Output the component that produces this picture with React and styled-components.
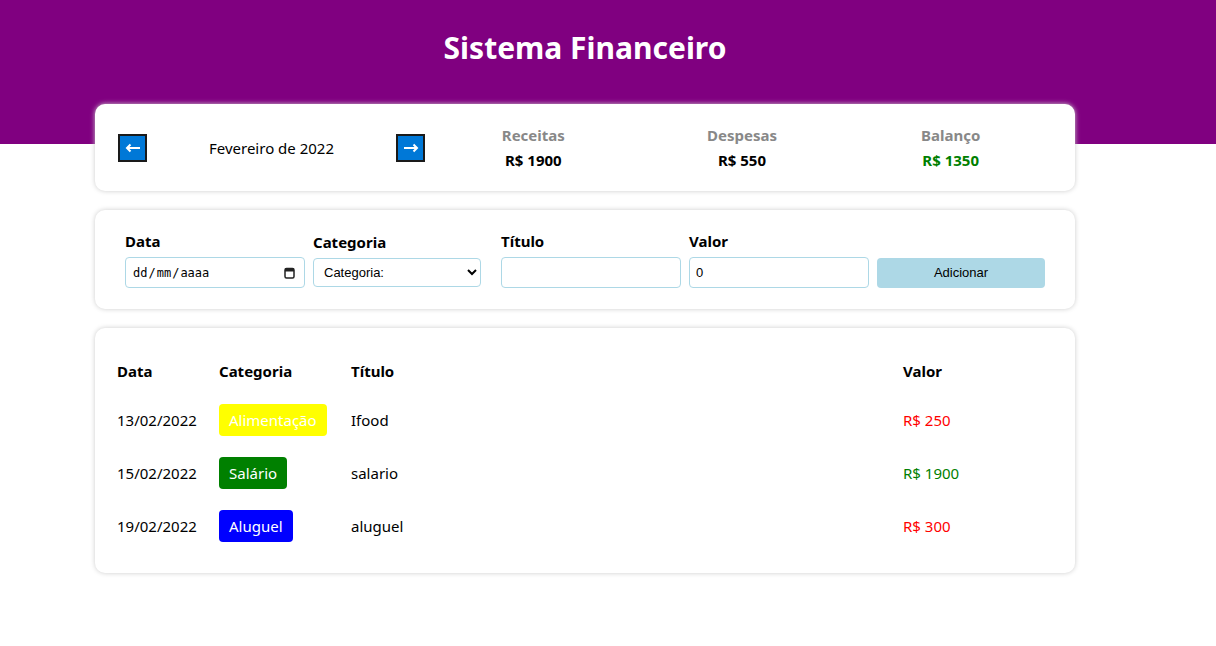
import React from 'react'
import styled, { createGlobalStyle } from 'styled-components'

const GlobalStyle = createGlobalStyle`
  * { box-sizing: border-box; }
  body {
    margin: 0;
    font-family: "Noto Sans", "Open Sans", sans-serif;
    font-size: 16px;
    color: #000;
    background: #fff;
  }
`

const items = [
  { date: '13/02/2022', category: 'Alimentação', color: '#ffff00', title: 'Ifood', value: 250, expense: true },
  { date: '15/02/2022', category: 'Salário', color: '#008000', title: 'salario', value: 1900, expense: false },
  { date: '19/02/2022', category: 'Aluguel', color: '#0000ff', title: 'aluguel', value: 300, expense: true },
]

function Arrow({ dir }) {
  return (
    <svg width="16" height="10" viewBox="0 0 16 10">
      {dir === 'left' ? (
        <path d="M15 5H2M5.5 1.5L2 5l3.5 3.5" fill="none" stroke="#fff" strokeWidth="2" />
      ) : (
        <path d="M1 5h13M10.5 1.5L14 5l-3.5 3.5" fill="none" stroke="#fff" strokeWidth="2" />
      )}
    </svg>
  )
}

export default function App() {
  return (
    <>
      <GlobalStyle />
      <Header>
        <HeaderTitle>Sistema Financeiro</HeaderTitle>
      </Header>
      <Body>
        <InfoCard>
          <MonthArea>
            <ArrowBtn><Arrow dir="left" /></ArrowBtn>
            <MonthTitle>Fevereiro de 2022</MonthTitle>
            <ArrowBtn><Arrow dir="right" /></ArrowBtn>
          </MonthArea>
          <ResumeArea>
            <ResumeItem>
              <ResumeTitle>Receitas</ResumeTitle>
              <ResumeValue>R$ 1900</ResumeValue>
            </ResumeItem>
            <ResumeItem>
              <ResumeTitle>Despesas</ResumeTitle>
              <ResumeValue>R$ 550</ResumeValue>
            </ResumeItem>
            <ResumeItem>
              <ResumeTitle>Balanço</ResumeTitle>
              <ResumeValue $color="#008000">R$ 1350</ResumeValue>
            </ResumeItem>
          </ResumeArea>
        </InfoCard>

        <FormCard>
          <Field>
            <FieldLabel>Data</FieldLabel>
            <DateBox>
              <DateText>dd<Sep>/</Sep>mm<Sep>/</Sep>aaaa</DateText>
              <svg width="11" height="12" viewBox="0 0 11 12">
                <rect x="1" y="1.5" width="9" height="9.5" rx="1.5" fill="none" stroke="#222" strokeWidth="1.5" />
                <rect x="1" y="1.5" width="9" height="3" fill="#222" />
              </svg>
            </DateBox>
          </Field>
          <Field>
            <FieldLabel>Categoria</FieldLabel>
            <Select defaultValue="">
              <option value="">Categoria:</option>
            </Select>
          </Field>
          <Field>
            <FieldLabel>Título</FieldLabel>
            <TextInput type="text" />
          </Field>
          <Field>
            <FieldLabel>Valor</FieldLabel>
            <TextInput type="text" defaultValue="0" />
          </Field>
          <Field>
            <FieldLabel>&nbsp;</FieldLabel>
            <AddButton>Adicionar</AddButton>
          </Field>
        </FormCard>

        <TableCard>
          <TableRow $head>
            <HeadCell>Data</HeadCell>
            <HeadCell>Categoria</HeadCell>
            <HeadCell>Título</HeadCell>
            <HeadCell>Valor</HeadCell>
          </TableRow>
          {items.map((item) => (
            <TableRow key={item.date}>
              <Cell>{item.date}</Cell>
              <Cell>
                <Badge $bg={item.color}>{item.category}</Badge>
              </Cell>
              <Cell>{item.title}</Cell>
              <Cell $color={item.expense ? '#ff0000' : '#008000'}>R$ {item.value}</Cell>
            </TableRow>
          ))}
        </TableCard>
      </Body>
    </>
  )
}

const Header = styled.header`
  height: 144px;
  background-color: #800080;
  padding: 0 141px 0 95px;
`

const HeaderTitle = styled.h1`
  margin: 0;
  padding-top: 27px;
  text-align: center;
  color: #fff;
  font-size: 30px;
  font-weight: 700;
  line-height: 42px;
`

const Body = styled.main`
  padding: 0 141px 40px 95px;
  margin-top: -40px;
`

const Card = styled.div`
  background: #fff;
  border-radius: 10px;
  box-shadow: 0 0 5px #cccccc;
`

const InfoCard = styled(Card)`
  display: flex;
  align-items: center;
  height: 87px;
  padding: 0 20px 0 23px;
`

const MonthArea = styled.div`
  display: flex;
  align-items: center;
  width: 307px;
`

const ArrowBtn = styled.div`
  width: 29px;
  height: 28px;
  background: #0078d7;
  border: 2px solid #1a1a1a;
  display: flex;
  align-items: center;
  justify-content: center;
`

const MonthTitle = styled.div`
  flex: 1;
  text-align: center;
  font-size: 15px;
`

const ResumeArea = styled.div`
  flex: 1;
  display: flex;
  margin-left: 4px;
`

const ResumeItem = styled.div`
  flex: 1;
  display: flex;
  flex-direction: column;
  align-items: center;
  gap: 3px;
`

const ResumeTitle = styled.div`
  color: #888888;
  font-weight: 700;
  font-size: 15px;
  line-height: 22px;
`

const ResumeValue = styled.div`
  color: ${(p) => p.$color || '#000'};
  font-weight: 700;
  font-size: 15px;
  line-height: 22px;
`

const FormCard = styled(Card)`
  margin-top: 19px;
  display: grid;
  grid-template-columns: repeat(5, 188px);
  align-items: center;
  padding: 21px 10px 21px 30px;
`

const Field = styled.div`
  display: flex;
  flex-direction: column;
`

const FieldLabel = styled.label`
  font-weight: 700;
  font-size: 15px;
  line-height: 20px;
  margin-bottom: 6px;
`

const inputBase = `
  height: 31px;
  border: 1px solid #add8e6;
  border-radius: 4px;
  background: #fff;
  font-size: 13px;
  outline: none;
`

const DateBox = styled.div`
  ${inputBase}
  width: 180px;
  display: flex;
  align-items: center;
  justify-content: space-between;
  padding: 0 9px 0 7px;
`

const DateText = styled.span`
  font-family: "DejaVu Sans Mono", "Liberation Mono", monospace;
  font-size: 12px;
  color: #000;
`

const Sep = styled.span`
  padding: 0 1px;
`

const Select = styled.select`
  ${inputBase}
  width: 168px;
  height: 29px;
  padding: 0 6px;
  font-family: "Liberation Sans", Arial, sans-serif;
  color: #000;
`

const TextInput = styled.input`
  ${inputBase}
  width: 180px;
  padding: 0 6px;
  font-family: "Liberation Sans", Arial, sans-serif;
`

const AddButton = styled.button`
  width: 168px;
  height: 30px;
  border: none;
  border-radius: 4px;
  background: #add8e6;
  color: #000;
  font-family: "Liberation Sans", Arial, sans-serif;
  font-size: 13px;
`

const TableCard = styled(Card)`
  margin-top: 19px;
  padding: 20px 20px 21px 22px;
`

const TableRow = styled.div`
  display: grid;
  grid-template-columns: 102px 132px 552px 1fr;
  align-items: center;
  height: ${(p) => (p.$head ? '45px' : '53px')};
`

const HeadCell = styled.div`
  font-weight: 700;
  font-size: 15px;
`

const Cell = styled.div`
  font-size: 15px;
  color: ${(p) => p.$color || '#000'};
`

const Badge = styled.span`
  display: inline-block;
  padding: 5px 10px;
  border-radius: 4px;
  background: ${(p) => p.$bg};
  color: #fff;
  font-size: 15px;
  line-height: 22px;
`
